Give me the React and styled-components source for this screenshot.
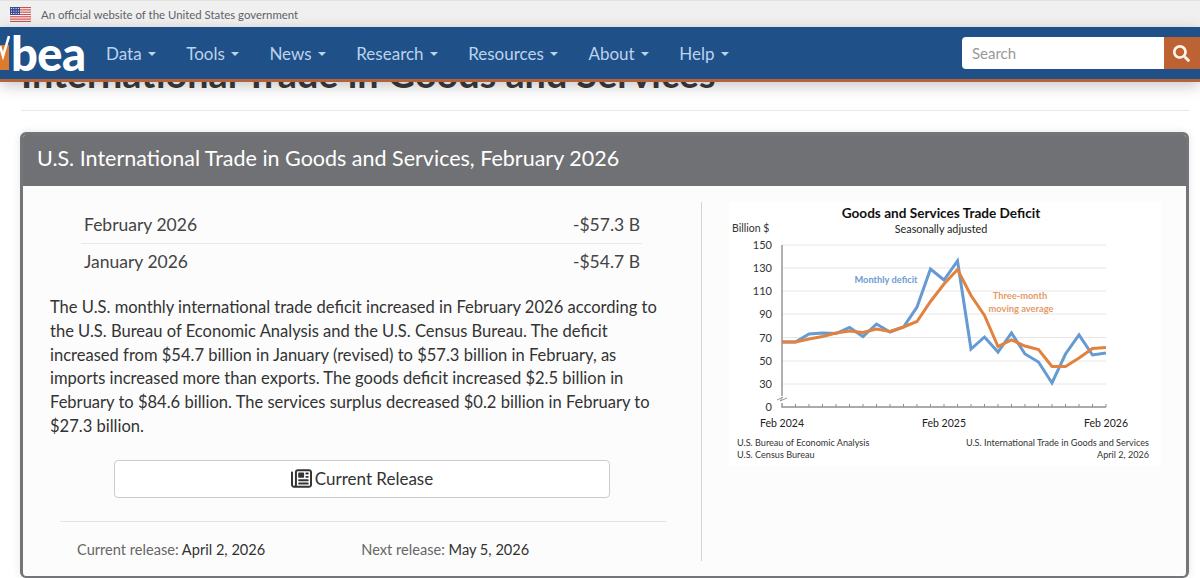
import React from 'react';
import styled, { createGlobalStyle } from 'styled-components';
import { FaSearch } from 'react-icons/fa';
import { FaRegNewspaper } from 'react-icons/fa6';

const GlobalStyle = createGlobalStyle`
  html, body {
    margin: 0;
    padding: 0;
    background: #fff;
    height: 578px;
    overflow: hidden;
    font-family: Lato, "Liberation Sans", sans-serif;
    color: #333;
  }
  * { box-sizing: border-box; }
`;

const Banner = styled.div`
  height: 27px;
  background: #f0f0f0;
  border-top: 1px solid #e2e2e2;
  display: flex;
  align-items: center;
  gap: 10px;
  padding-left: 10px;
  font-size: 11.4px;
  color: #5f6268;
`;

const Navbar = styled.nav`
  position: relative;
  z-index: 2;
  height: 55px;
  background: #1f5088;
  border-bottom: 3px solid #b5623b;
  box-shadow: 0 4px 14px rgba(0, 0, 0, 0.22);
  display: flex;
  align-items: center;
  overflow: hidden;
`;

const Logo = styled.div`
  width: 106px;
  height: 100%;
  flex: none;
  display: flex;
  align-items: center;
`;

const LogoMark = styled.svg`
  flex: none;
  width: 10px;
  height: 52px;
`;

const LogoText = styled.span`
  font-size: 47px;
  font-weight: 900;
  line-height: 1;
  color: #fff;
  letter-spacing: -0.5px;
  margin: 0 0 0 1px;
`;

const NavItems = styled.div`
  display: flex;
  gap: 30.6px;
  flex: 1;
`;

const NavItem = styled.a`
  display: flex;
  align-items: center;
  gap: 6px;
  font-size: 17px;
  color: #bcd3ec;
  white-space: nowrap;

  &::after {
    content: '';
    border-top: 4px solid #bcd3ec;
    border-left: 4px solid transparent;
    border-right: 4px solid transparent;
    margin-top: 2px;
  }
`;

const SearchBox = styled.div`
  display: flex;
  width: 239px;
  height: 32px;
  margin-right: -1px;
`;

const SearchInput = styled.input`
  flex: 1;
  min-width: 0;
  border: 0;
  border-radius: 4px 0 0 4px;
  background: #fff;
  padding: 0 10px;
  font: 15px Lato, sans-serif;
  color: #333;

  &::placeholder {
    color: #999;
    opacity: 1;
  }
`;

const SearchButton = styled.button`
  width: 37px;
  border: 0;
  background: #bd6232;
  color: #fdf3ea;
  display: flex;
  align-items: center;
  justify-content: center;
  padding: 0 2px 0 0;
  font-size: 17px;
`;

const Main = styled.main`
  padding: 0 11px 0 21px;
`;

const ClippedTitle = styled.div`
  height: 13px;
  overflow: hidden;
  display: flex;
  align-items: flex-end;
`;

const PageTitle = styled.h1`
  flex: none;
  margin: 0 0 1px;
  font-size: 37.75px;
  font-weight: 700;
  line-height: 40px;
  color: #3a3a3a;
  white-space: nowrap;
`;

const Rule = styled.hr`
  margin: 15px 0 21px;
  border: 0;
  border-top: 1px solid #e9e9e9;
`;

const Card = styled.section`
  margin-left: -1px;
  border: 3px solid #747578;
  border-bottom-width: 2px;
  border-radius: 6px;
  background: #fcfcfc;
  box-shadow: 0 0 8px rgba(0, 0, 0, 0.1);
  height: 446px;
  overflow: hidden;
`;

const CardHeader = styled.h2`
  margin: 0;
  height: 51px;
  background: #707174;
  color: #fff;
  font-size: 21.5px;
  font-weight: 400;
  line-height: 47px;
  padding-left: 14px;
`;

const CardBody = styled.div`
  display: grid;
  grid-template-columns: 679px 1fr;
  padding-top: 16px;
`;

const LeftColumn = styled.div`
  height: 359px;
  border-right: 1px solid #d4d4d4;
  padding-top: 4px;
`;

const Stats = styled.div`
  margin: 0 59px 0 58px;
`;

const StatRow = styled.div`
  display: flex;
  justify-content: space-between;
  height: ${props => (props.$ruled ? '36px' : '37px')};
  align-items: center;
  padding: 0 2px 0 3px;
  font-size: 17.5px;
  color: #444;
  border-top: ${props => (props.$ruled ? '1px solid #e9e9e9' : '0')};
`;

const Summary = styled.p`
  margin: 17px 30px 0 27px;
  font-size: 16.55px;
  line-height: 23.8px;
  color: #333;
`;

const ReleaseButton = styled.a`
  display: flex;
  align-items: center;
  justify-content: center;
  gap: 3px;
  width: 496px;
  height: 38px;
  margin: 21px 0 0 91px;
  border: 1px solid #ccc;
  border-radius: 4px;
  background: #fff;
  font-size: 17px;
  color: #333;

  svg {
    font-size: 21px;
  }
`;

const FooterRule = styled.hr`
  margin: 23px 35px 0 37px;
  border: 0;
  border-top: 1px solid #e4e4e4;
`;

const ReleaseDates = styled.div`
  display: flex;
  gap: 96px;
  padding: 19px 0 0 54px;
  font-size: 14.6px;
  color: #666;

  b {
    font-weight: 400;
    color: #333;
  }
`;

const ChartPanel = styled.figure`
  margin: 0 0 0 27px;
  width: 432px;
  height: 264px;
  background: #fff;
`;

const ChartSvg = styled.svg`
  display: block;
  font-family: Lato, "Open Sans", sans-serif;
`;

const navLinks = ['Data', 'Tools', 'News', 'Research', 'Resources', 'About', 'Help'];

const gridValues = [
  ['150', 245], ['130', 268], ['110', 291], ['90', 314],
  ['70', 337.5], ['50', 361], ['30', 384],
];

const monthly = [342, 342, 334, 333, 333.5, 327.5, 336.5, 324, 332, 327, 307, 269, 280, 261, 349, 337, 352, 333, 354, 362, 383, 354, 335, 355, 353];
const average = [342, 342, 339, 336.5, 333, 331, 332.5, 329, 331.5, 327, 321.5, 301.5, 284, 269.5, 295.5, 315.5, 346.5, 340, 346, 349.5, 366.5, 366.5, 358, 348.5, 347.5];

// the panel starts at 729,202 in the page, so the chart is drawn in page coordinates
const monthX = (i) => 782 + 13.5 * i;
const toPoints = (list) => list.map((y, i) => `${monthX(i)},${y}`).join(' ');

const Chart = () => (
  <ChartSvg width="432" height="264" viewBox="729 202 432 264">
    <text x="941" y="218" textAnchor="middle" fontSize="13.6" fontWeight="700" fill="#111">Goods and Services Trade Deficit</text>
    <text x="941" y="233" textAnchor="middle" fontSize="10.8" fill="#222">Seasonally adjusted</text>
    <text x="732" y="232" fontSize="10.5" fill="#333">Billion $</text>

    {gridValues.map(([label, y]) => (
      <g key={label}>
        <line x1="782" x2="1106" y1={y} y2={y} stroke="#e6e6e6" />
        <text x="772" y={y + 4} textAnchor="end" fontSize="11" fill="#333">{label}</text>
      </g>
    ))}
    <text x="772" y="411" textAnchor="end" fontSize="11" fill="#333">0</text>

    <polyline points="782,245 782,396" fill="none" stroke="#8f8f8f" strokeWidth="1.4" />
    <polyline points="782,403 782,407 1106,407" fill="none" stroke="#8f8f8f" strokeWidth="1.4" />
    <polyline points="777,400 783,397 780,401 787,398" fill="none" stroke="#9a9a9a" />
    {monthly.slice(1).map((_, i) => (
      <line key={i} x1={monthX(i + 1)} x2={monthX(i + 1)} y1="404" y2="407" stroke="#8f8f8f" />
    ))}

    <polyline points={toPoints(monthly)} fill="none" stroke="#659ad2" strokeWidth="3" />
    <polyline points={toPoints(average)} fill="none" stroke="#e2823f" strokeWidth="3" />

    <text x="886" y="283" textAnchor="middle" fontSize="9.3" fontWeight="700" fill="#6f9bd1">Monthly deficit</text>
    <text x="1020" y="299" textAnchor="middle" fontSize="9.3" fontWeight="700" fill="#e59a66">Three-month</text>
    <text x="1021" y="312" textAnchor="middle" fontSize="9.3" fontWeight="700" fill="#e59a66">moving average</text>

    <text x="782" y="427" textAnchor="middle" fontSize="10.5" fill="#222">Feb 2024</text>
    <text x="944" y="427" textAnchor="middle" fontSize="10.5" fill="#222">Feb 2025</text>
    <text x="1106" y="427" textAnchor="middle" fontSize="10.5" fill="#222">Feb 2026</text>

    <text x="737" y="446" fontSize="9.1" fill="#333">U.S. Bureau of Economic Analysis</text>
    <text x="737" y="458" fontSize="9.1" fill="#333">U.S. Census Bureau</text>
    <text x="1149" y="446" textAnchor="end" fontSize="9.1" fill="#333">U.S. International Trade in Goods and Services</text>
    <text x="1149" y="458" textAnchor="end" fontSize="9.1" fill="#333">April 2, 2026</text>
  </ChartSvg>
);

const Flag = () => (
  <svg width="21" height="15" viewBox="0 0 21 15">
    <rect width="21" height="15" fill="#fff" />
    {[0, 2.3, 4.6, 6.9, 9.2, 11.5, 13.8].map((y) => (
      <rect key={y} y={y} width="21" height="1.2" fill="#c9504f" />
    ))}
    <rect width="10" height="8" fill="#3a4a94" />
    {[1.5, 4, 6.5].map((y) => [1.5, 3.8, 6.1, 8.4].map((x) => (
      <circle key={`${x}-${y}`} cx={x} cy={y} r="0.6" fill="#fff" />
    )))}
  </svg>
);

const App = () => (
  <>
    <GlobalStyle />
    <Banner>
      <Flag />
      <span>An official website of the United States government</span>
    </Banner>
    <Navbar>
      <Logo>
        <LogoMark viewBox="0 0 10 52">
          <rect x="0" y="18" width="9" height="25" fill="#dd7a2e" />
          <path d="M0 19 L3 29 L9 9" fill="none" stroke="#fff" strokeWidth="2.6" />
        </LogoMark>
        <LogoText>bea</LogoText>
      </Logo>
      <NavItems>
        {navLinks.map((link) => (
          <NavItem key={link}>{link}</NavItem>
        ))}
      </NavItems>
      <SearchBox>
        <SearchInput placeholder="Search" />
        <SearchButton aria-label="Search"><FaSearch /></SearchButton>
      </SearchBox>
    </Navbar>
    <Main>
      <ClippedTitle>
        <PageTitle>International Trade in Goods and Services</PageTitle>
      </ClippedTitle>
      <Rule />
      <Card>
        <CardHeader>U.S. International Trade in Goods and Services, February 2026</CardHeader>
        <CardBody>
          <LeftColumn>
            <Stats>
              <StatRow><span>February 2026</span><span>-$57.3 B</span></StatRow>
              <StatRow $ruled><span>January 2026</span><span>-$54.7 B</span></StatRow>
            </Stats>
            <Summary>
              The U.S. monthly international trade deficit increased in February 2026 according to the U.S. Bureau of Economic Analysis and the U.S. Census Bureau. The deficit increased from $54.7 billion in January (revised) to $57.3 billion in February, as imports increased more than exports. The goods deficit increased $2.5 billion in February to $84.6 billion. The services surplus decreased $0.2 billion in February to $27.3 billion.
            </Summary>
            <ReleaseButton><FaRegNewspaper />Current Release</ReleaseButton>
            <FooterRule />
            <ReleaseDates>
              <span>Current release: <b>April 2, 2026</b></span>
              <span>Next release: <b>May 5, 2026</b></span>
            </ReleaseDates>
          </LeftColumn>
          <ChartPanel><Chart /></ChartPanel>
        </CardBody>
      </Card>
    </Main>
  </>
);

export default App;
